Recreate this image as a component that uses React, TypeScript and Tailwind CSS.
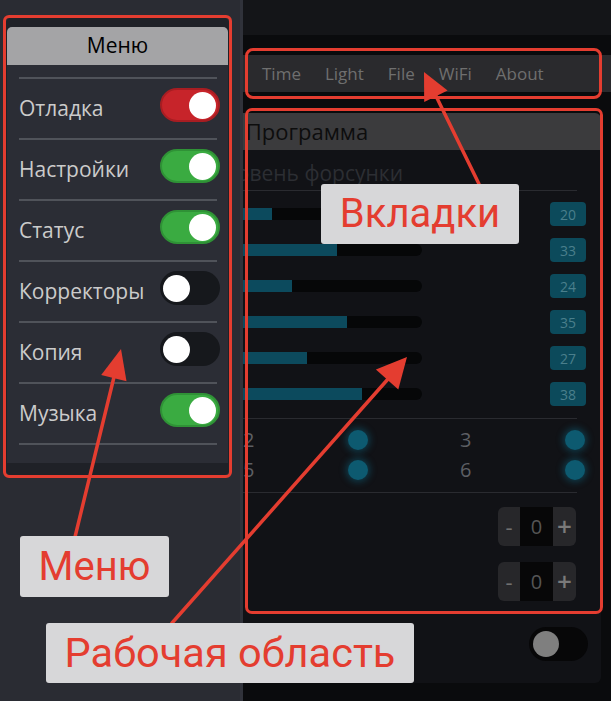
import React from "react";

const menuItems: { label: string; state: "red" | "green" | "off" }[] = [
  { label: "Отладка", state: "red" },
  { label: "Настройки", state: "green" },
  { label: "Статус", state: "green" },
  { label: "Корректоры", state: "off" },
  { label: "Копия", state: "off" },
  { label: "Музыка", state: "green" },
];

const tabs = ["Time", "Light", "File", "WiFi", "About"];
const levels = [20, 33, 24, 35, 27, 38];

function MenuToggle({ state }: { state: "red" | "green" | "off" }) {
  if (state === "off") {
    return (
      <div className="mb-[7px] flex h-[34px] w-[60px] items-center justify-start rounded-full bg-[#16181c] px-[3px]">
        <div className="h-[27px] w-[27px] rounded-full bg-white" />
      </div>
    );
  }
  return (
    <div
      className={
        state === "red"
          ? "mb-[7px] flex h-[34px] w-[60px] items-center justify-end rounded-full border-[2px] border-[#a81d22] bg-[#c7242a] px-[2px]"
          : "mb-[7px] flex h-[34px] w-[60px] items-center justify-end rounded-full border-[2px] border-[#2f9236] bg-[#3aab41] px-[2px]"
      }
    >
      <div className="h-[27px] w-[27px] rounded-full bg-white" />
    </div>
  );
}

function Divider() {
  return <div className="h-[2px] w-[198px] bg-[#50535a]" />;
}

function Stepper({ className }: { className: string }) {
  return (
    <div className={className}>
      <div className="flex w-[22px] items-center justify-center bg-[#27272a] text-[22px] text-[#707070]">-</div>
      <div className="flex w-[33px] items-center justify-center bg-[#070708] text-[20px] text-[#555555]">0</div>
      <div className="flex w-[23px] items-center justify-center bg-[#27272a] text-[26px] font-semibold text-[#7a7a7a]">+</div>
    </div>
  );
}

export default function App() {
  return (
    <div className="relative h-[701px] w-[611px] overflow-hidden bg-[#0a0b0d] font-['Open_Sans',sans-serif]">
      {/* Main workspace */}
      <main className="flex h-[701px] flex-col">
        <div className="h-[35px] bg-[#141518]" />
        <nav className="mt-[20px] flex h-[37px] items-center bg-[#2a2a2d] pl-[250px] text-[17px] text-[#6f6f6f]">
          {tabs.map((t) => (
            <span key={t} className="px-[12px]">
              {t}
            </span>
          ))}
        </nav>
        <section className="ml-[13px] mr-[10px] mt-[21px] flex h-[570px] flex-col overflow-hidden rounded-[6px] bg-[#111216]">
          <div className="flex h-[37px] items-center justify-center bg-[#3b3b3d] text-[22px] text-[#0d0d0d]">
            Программа
          </div>
          <div className="mt-[10px] h-[26px] text-center text-[21px] leading-[26px] text-[#2c2e33]">
            Уровень форсунки
          </div>
          <div className="ml-[24px] mt-[4px] h-px w-[540px] bg-[#2a2b30]" />
          <div className="mt-[5px] flex flex-col">
            {levels.map((v, i) => (
              <div key={i} className="flex h-[36px] items-center pl-[159px] pr-[15px]">
                <div className="h-[12px] w-[250px] overflow-hidden rounded-full bg-[#060708]">
                  <div className="h-[12px] bg-[#0c4a5d]" style={{ width: v * 5 }} />
                </div>
                <div className="ml-auto flex h-[24px] w-[36px] items-center justify-center rounded-[4px] bg-[#0c4a5b] text-[14px] text-[#4a7f8c]">
                  {v}
                </div>
              </div>
            ))}
          </div>
          <div className="ml-[24px] mt-[6px] h-px w-[540px] bg-[#2a2b30]" />
          <div className="mt-[6px] flex flex-col">
            {[
              [1, 2, 3],
              [4, 5, 6],
            ].map((row, r) => (
              <div key={r} className="flex h-[30px] items-center gap-[92px] pl-[13px]">
                {row.map((n) => (
                  <div key={n} className="flex w-[125px] items-center justify-between">
                    <span className="text-[20px] leading-none text-[#5d5f64]">{n}</span>
                    <span className="h-[20px] w-[20px] rounded-full bg-[#0d5a70] shadow-[0_0_7px_2px_rgba(14,110,140,0.45)]" />
                  </div>
                ))}
              </div>
            ))}
          </div>
          <div className="ml-[24px] mt-[7px] h-px w-[540px] bg-[#2a2b30]" />
          <Stepper className="mr-[25px] mt-[14px] flex h-[39px] self-end overflow-hidden rounded-[6px]" />
          <Stepper className="mr-[25px] mt-[16px] flex h-[39px] self-end overflow-hidden rounded-[6px]" />
          <div className="mr-[13px] mt-[26px] flex h-[34px] w-[59px] items-center self-end rounded-full bg-[#070708] pl-[4px]">
            <div className="h-[26px] w-[26px] rounded-full bg-[#7f7f7f]" />
          </div>
        </section>
      </main>

      {/* Sidebar drawer overlay */}
      <aside className="absolute left-0 top-0 h-[701px] w-[243px] border-r-[3px] border-[#30323a] bg-[#2a2c33] pl-[6px] pt-[18px]">
        <div className="h-[457px] w-[223px] rounded-[5px] bg-[#1f2127] px-[1px] pt-[9px]">
          <div className="rounded-t-[5px] bg-[#2b2d35]">
            <div className="flex h-[38px] items-center justify-center rounded-t-[5px] bg-[#a4a4a6] text-[21px] text-black">
              Меню
            </div>
            <div className="pb-[18px] pl-[12px] pr-[8px] pt-[12px]">
              <Divider />
              {menuItems.map((it) => (
                <React.Fragment key={it.label}>
                  <div className="flex h-[59px] items-center justify-between">
                    <span className="text-[21px] text-[#cbcbcb]">{it.label}</span>
                    <MenuToggle state={it.state} />
                  </div>
                  <Divider />
                </React.Fragment>
              ))}
            </div>
          </div>
        </div>
      </aside>

      {/* Annotation overlay */}
      <div className="pointer-events-none absolute left-[3px] top-[15px] h-[463px] w-[229px] rounded-[6px] border-[3px] border-[#e43d30]" />
      <div className="pointer-events-none absolute left-[245px] top-[48px] h-[51px] w-[357px] rounded-[8px] border-[3px] border-[#e43d30]" />
      <div className="pointer-events-none absolute left-[245px] top-[108px] h-[506px] w-[358px] rounded-[7px] border-[3px] border-[#e43d30]" />

      <svg className="pointer-events-none absolute left-0 top-0" width="611" height="701" viewBox="0 0 611 701">
        <g stroke="#e43d30" strokeWidth="3.5" strokeLinecap="round">
          <line x1="75" y1="537" x2="114" y2="377" />
          <line x1="479" y1="184" x2="436" y2="96" />
          <line x1="172" y1="623" x2="388" y2="379" />
        </g>
        <g fill="#e43d30">
          <polygon points="121,349 126.5,381.2 101.2,375" />
          <polygon points="424,72 447.6,90.5 424.2,101.9" />
          <polygon points="407,357 398.3,389.4 375.9,369.6" />
        </g>
      </svg>

      <div className="absolute left-[321px] top-[184px] flex h-[60px] w-[198px] items-center justify-center rounded-[3px] bg-[#d7d7d9] font-['Roboto',sans-serif] text-[40px] text-[#e43d30]">
        Вкладки
      </div>
      <div className="absolute left-[20px] top-[536px] flex h-[61px] w-[149px] items-center justify-center rounded-[3px] bg-[#d7d7d9] font-['Roboto',sans-serif] text-[40px] text-[#e43d30]">
        Меню
      </div>
      <div className="absolute left-[46px] top-[623px] flex h-[60px] w-[368px] items-center justify-center rounded-[3px] bg-[#d7d7d9] font-['Roboto',sans-serif] text-[41.5px] text-[#e43d30]">
        Рабочая область
      </div>
    </div>
  );
}
